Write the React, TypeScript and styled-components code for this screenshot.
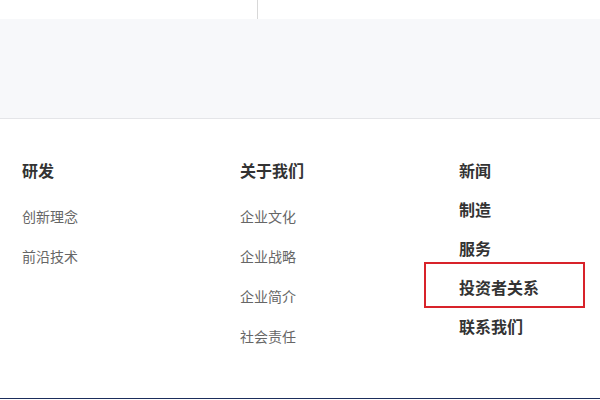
import React from "react";
import styled, { createGlobalStyle } from "styled-components";

const GlobalStyle = createGlobalStyle`
   body {
      margin: 0;
      background: #ffffff;
      font-family: "Noto Sans CJK SC", "Noto Sans", sans-serif;
   }
`;

const TopStrip = styled.div`
   display: flex;
   height: 19px;
   background: #ffffff;
`;

const TopCell = styled.div`
   width: 257px;
   border-right: 1px solid #d8d8d8;
`;

const Banner = styled.div`
   height: 99px;
   background: #f7f8fa;
   border-bottom: 1px solid #e4e5e8;
`;

const Footer = styled.footer`
   display: grid;
   grid-template-columns: 218px 219px 1fr;
   height: 247px;
   padding: 32px 0 0 22px;
   background: #ffffff;
`;

const Column = styled.div`
   display: flex;
   flex-direction: column;
`;

const Heading = styled.div`
   font-size: 16px;
   font-weight: 700;
   line-height: 39px;
   color: #333333;
   margin-bottom: 6px;
`;

const SubLink = styled.a`
   font-size: 14px;
   line-height: 40px;
   color: #666666;
   text-decoration: none;
`;

const MainLink = styled.a<{ $active?: boolean }>`
   position: relative;
   align-self: flex-start;
   font-size: 16px;
   font-weight: 700;
   line-height: 39px;
   color: #333333;
   text-decoration: none;

   &::after {
      content: "";
      display: ${({ $active }) => ($active ? "block" : "none")};
      position: absolute;
      left: -35px;
      right: -46px;
      top: -6px;
      bottom: -1px;
      border: 2px solid #d8232a;
   }
`;

const BottomBar = styled.div`
   height: 1px;
   background: #1b2d5b;
`;

const columns = [
   { title: "研发", links: ["创新理念", "前沿技术"] },
   { title: "关于我们", links: ["企业文化", "企业战略", "企业简介", "社会责任"] },
];

const mainLinks = ["新闻", "制造", "服务", "投资者关系", "联系我们"];

export default function App() {
   return (
      <>
         <GlobalStyle />
         <TopStrip>
            <TopCell />
         </TopStrip>
         <Banner />
         <Footer>
            {columns.map((col) => (
               <Column key={col.title}>
                  <Heading>{col.title}</Heading>
                  {col.links.map((l) => (
                     <SubLink key={l} href="#">
                        {l}
                     </SubLink>
                  ))}
               </Column>
            ))}
            <Column>
               {mainLinks.map((l) => (
                  <MainLink key={l} href="#" $active={l === "投资者关系"}>
                     {l}
                  </MainLink>
               ))}
            </Column>
         </Footer>
         <BottomBar />
      </>
   );
}
